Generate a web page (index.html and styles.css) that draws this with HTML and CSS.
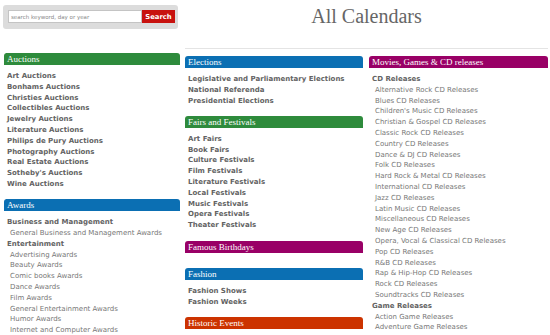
FILE: index.html
```html
<!DOCTYPE html>
<html>
<head>
<meta charset="utf-8">
<title>All Calendars</title>
<link rel="stylesheet" href="styles.css">
</head>
<body>
<div class="page">
  <div class="left">
    <form class="search">
      <input class="search-input" type="text" placeholder="search keyword, day or year">
      <button class="search-btn" type="button">Search</button>
    </form>
    <section class="cat">
      <h2 class="cat-head green">Auctions</h2>
      <ul class="cat-list">
        <li class="b">Art Auctions</li>
        <li class="b">Bonhams Auctions</li>
        <li class="b">Christies Auctions</li>
        <li class="b">Collectibles Auctions</li>
        <li class="b">Jewelry Auctions</li>
        <li class="b">Literature Auctions</li>
        <li class="b">Philips de Pury Auctions</li>
        <li class="b">Photography Auctions</li>
        <li class="b">Real Estate Auctions</li>
        <li class="b">Sotheby's Auctions</li>
        <li class="b">Wine Auctions</li>
      </ul>
    </section>
    <section class="cat">
      <h2 class="cat-head blue">Awards</h2>
      <ul class="cat-list">
        <li class="b">Business and Management</li>
        <li class="s">General Business and Management Awards</li>
        <li class="b">Entertainment</li>
        <li class="s">Advertising Awards</li>
        <li class="s">Beauty Awards</li>
        <li class="s">Comic books Awards</li>
        <li class="s">Dance Awards</li>
        <li class="s">Film Awards</li>
        <li class="s">General Entertainment Awards</li>
        <li class="s">Humor Awards</li>
        <li class="s">Internet and Computer Awards</li>
      </ul>
    </section>
  </div>
  <div class="right">
    <h1 class="title">All Calendars</h1>
    <div class="cols">
      <div class="col">
        <section class="cat">
          <h2 class="cat-head blue">Elections</h2>
          <ul class="cat-list">
            <li class="b">Legislative and Parliamentary Elections</li>
            <li class="b">National Referenda</li>
            <li class="b">Presidential Elections</li>
          </ul>
        </section>
        <section class="cat">
          <h2 class="cat-head green">Fairs and Festivals</h2>
          <ul class="cat-list">
            <li class="b">Art Fairs</li>
            <li class="b">Book Fairs</li>
            <li class="b">Culture Festivals</li>
            <li class="b">Film Festivals</li>
            <li class="b">Literature Festivals</li>
            <li class="b">Local Festivals</li>
            <li class="b">Music Festivals</li>
            <li class="b">Opera Festivals</li>
            <li class="b">Theater Festivals</li>
          </ul>
        </section>
        <section class="cat">
          <h2 class="cat-head magenta">Famous Birthdays</h2>
          <ul class="cat-list"></ul>
        </section>
        <section class="cat">
          <h2 class="cat-head blue">Fashion</h2>
          <ul class="cat-list">
            <li class="b">Fashion Shows</li>
            <li class="b">Fashion Weeks</li>
          </ul>
        </section>
        <section class="cat">
          <h2 class="cat-head orange">Historic Events</h2>
        </section>
      </div>
      <div class="col">
        <section class="cat">
          <h2 class="cat-head magenta">Movies, Games &amp; CD releases</h2>
          <ul class="cat-list">
            <li class="b">CD Releases</li>
            <li class="s">Alternative Rock CD Releases</li>
            <li class="s">Blues CD Releases</li>
            <li class="s">Children's Music CD Releases</li>
            <li class="s">Christian &amp; Gospel CD Releases</li>
            <li class="s">Classic Rock CD Releases</li>
            <li class="s">Country CD Releases</li>
            <li class="s">Dance &amp; DJ CD Releases</li>
            <li class="s">Folk CD Releases</li>
            <li class="s">Hard Rock &amp; Metal CD Releases</li>
            <li class="s">International CD Releases</li>
            <li class="s">Jazz CD Releases</li>
            <li class="s">Latin Music CD Releases</li>
            <li class="s">Miscellaneous CD Releases</li>
            <li class="s">New Age CD Releases</li>
            <li class="s">Opera, Vocal &amp; Classical CD Releases</li>
            <li class="s">Pop CD Releases</li>
            <li class="s">R&amp;B CD Releases</li>
            <li class="s">Rap &amp; Hip-Hop CD Releases</li>
            <li class="s">Rock CD Releases</li>
            <li class="s">Soundtracks CD Releases</li>
            <li class="b">Game Releases</li>
            <li class="s">Action Game Releases</li>
            <li class="s">Adventure Game Releases</li>
          </ul>
        </section>
      </div>
    </div>
  </div>
</div>
</body>
</html>
```
FILE: styles.css
```css
html, body {
  margin: 0;
  padding: 0;
  background: #ffffff;
  overflow: hidden;
}
body {
  width: 550px;
  height: 335px;
  font-family: "DejaVu Sans", Verdana, sans-serif;
}
.page {
  display: flex;
  gap: 5px;
  padding-left: 4px;
}
.left {
  width: 176px;
  flex: none;
}
.right {
  width: 363px;
  flex: none;
}
.search {
  display: flex;
  margin: 5px 0 0 -1px;
  width: 175px;
  height: 24px;
  box-sizing: border-box;
  padding: 5px 3px 5px 5px;
  background: #dcdcdc;
  border-radius: 3px;
}
.search-input {
  width: 134px;
  height: 13px;
  box-sizing: border-box;
  margin: 0;
  padding: 0 2px;
  border: 1px solid #c4c4c4;
  background: #fff;
  font-family: "DejaVu Sans", sans-serif;
  font-size: 5.5px;
  color: #888;
  outline: none;
}
.search-input::placeholder {
  color: #8a8a8a;
}
.search-btn {
  width: 33px;
  height: 13px;
  margin: 0;
  padding: 0;
  border: none;
  background: #c8120f;
  color: #fff;
  font-family: "DejaVu Sans", sans-serif;
  font-weight: bold;
  font-size: 6.8px;
}
.left .cat:first-of-type {
  margin-top: 24px;
}
.title {
  margin: 0;
  height: 49px;
  box-sizing: border-box;
  padding-top: 5px;
  border-bottom: 1px solid #e4e4e4;
  text-align: center;
  font-family: "Liberation Serif", "Times New Roman", serif;
  font-weight: normal;
  font-size: 20px;
  line-height: 23px;
  color: #666;
}
.cols {
  display: grid;
  grid-template-columns: 178px 179px;
  column-gap: 6px;
  margin-top: 7px;
}
.cat {
  margin: 0;
}
.cat-head {
  margin: 0;
  height: 12px;
  padding-left: 3px;
  border-radius: 3px 3px 0 0;
  font-family: "Liberation Serif", "Times New Roman", serif;
  font-weight: normal;
  font-size: 9px;
  line-height: 13px;
  color: #fff;
  white-space: nowrap;
  overflow: hidden;
}
.green { background: #2e8b3c; }
.blue { background: #0b6fb3; }
.magenta { background: #990066; }
.orange { background: #cc3300; }
.cat-list {
  list-style: none;
  margin: 0;
  padding: 6px 0 9.5px 3px;
}
.cat-list li {
  font-size: 7px;
  line-height: 10.8px;
  white-space: nowrap;
}
.cat-list .b {
  font-weight: bold;
  color: #636363;
}
.cat-list .s {
  color: #777;
  padding-left: 3px;
}
```
